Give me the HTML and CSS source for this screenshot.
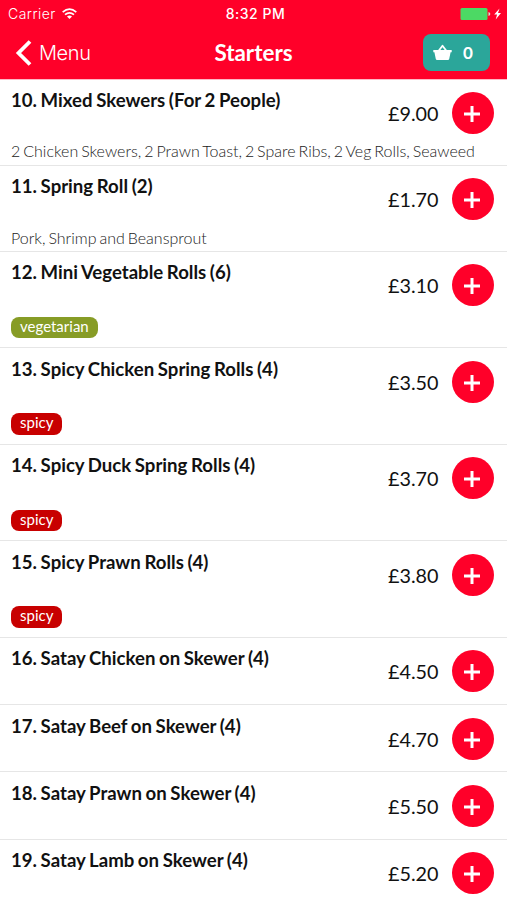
FILE: index.html
```html
<!DOCTYPE html>
<html lang="en">
<head>
<meta charset="utf-8">
<title>Starters</title>
<link rel="stylesheet" href="styles.css">
</head>
<body>
<header class="top">
  <div class="status">
    <div class="carrier"><span>Carrier</span>
      <svg class="wifi" width="15" height="12" viewBox="0 0 15 12" fill="none" stroke="#fff" stroke-width="1.7"><path d="M.7 4.200Q7.500-1.800 14.300 4.200M3 6.700Q7.500 2.900 12 6.700"/><path d="M5 8.500Q7.500 6.700 10 8.500L7.500 11z" fill="#fff" stroke="none"/></svg>
    </div>
    <div class="time">8:32 PM</div>
    <div class="power">
      <svg width="43" height="14" viewBox="0 0 43 14"><rect x=".5" y="1" width="27" height="12" rx="1.500" fill="#4cd964"/><path d="M28.500 5v4q1.800-.6 1.800-2t-1.800-2z" fill="#c9f2ce"/><path d="M39.500 1.500L34.200 7.500h2.900L35.700 12.500L41 6h-3z" fill="#fff"/></svg>
    </div>
  </div>
  <nav class="nav">
    <div class="back"><svg width="17" height="26" viewBox="0 0 17 26" fill="none" stroke="#fff" stroke-width="3.800"><path d="M15 1.500L3.500 13L15 24.500"/></svg><span>Menu</span></div>
    <h1 class="title">Starters</h1>
    <div class="basket"><svg width="19" height="17" viewBox="0 0 19 17"><path d="M5.500 7L9.500 1.800L13.500 7" stroke="#fff" stroke-width="1.800" fill="none" stroke-linejoin="round"/><path d="M.3 6h18.400v2.300h-1.100L16.200 15q-.3 1-1.200 1H4q-.9 0-1.200-1L1.400 8.300H.3z" fill="#fff"/></svg><span>0</span></div>
  </nav>
</header>
<main class="list" id="list"></main>
<script src="script.js"></script>
</body>
</html>
```
FILE: styles.css
```css
* { box-sizing: border-box; }
body { margin: 0; width: 507px; height: 900px; overflow: hidden; background: #fff; color: #111; font-family: Lato, sans-serif; }
.top { height: 79.600px; background: #ff0029; color: #fff; border-bottom: 1px solid #ffb9c5; }
.status { display: grid; grid-template-columns: 1fr auto 1fr; height: 27px; align-items: center; padding: 0 4px 0 8px; font: 14px/27px Inter, sans-serif; }
.carrier { display: flex; align-items: center; gap: 6px; font-weight: 300; letter-spacing: .45px; }
.time { font-size: 14px; font-weight: 500; letter-spacing: .5px; }
.power { display: flex; justify-content: flex-end; }
.nav { display: grid; grid-template-columns: 1fr auto 1fr; align-items: center; height: 51px; padding: 0 17px 0 15px; }
.back { display: flex; align-items: center; gap: 7px; font-family: Inter, sans-serif; font-size: 20px; font-weight: 300; letter-spacing: -.4px; }
.title { margin: 0 0 0 2px; font-size: 22.400px; font-weight: 700; line-height: 28px; }
.basket { justify-self: end; display: flex; align-items: center; gap: 11px; width: 67px; height: 37px; padding-left: 10px; border-radius: 8px; background: #2ba69a; font-size: 17px; font-weight: 700; }
.item { display: flex; border-bottom: 1px solid #e6e6e6; padding: 0 13px 0 11px; height: 67.200px; }
.item.note { height: 86.200px; }
.item.tagged { height: 96.500px; }
.info { flex: 1; min-width: 0; display: flex; flex-direction: column; }
.name { margin: 8.500px 0 0; font-size: 18.600px; line-height: 24px; font-weight: 700; word-spacing: -.900px; white-space: nowrap; }
.desc { margin: 29.300px 0 0; font-size: 16px; line-height: 20px; font-weight: 300; word-spacing: -1.400px; color: #222; white-space: nowrap; }
.tag { align-self: flex-start; margin-top: 32.500px; height: 21.500px; padding: 0 9px; border-radius: 8px; color: #fff; font-size: 15px; line-height: 19px; }
.vegetarian { background: #879c26; }
.spicy { background: #c80000; }
.buy { display: flex; align-items: center; gap: 13.500px; height: 42px; margin-top: 12.500px; font-size: 19.800px; }
.add { width: 42px; height: 42px; border: 0; border-radius: 50%; background: #ff0029; padding: 2px 2px 0 0; display: grid; place-items: center; }
```
FILE: script.js
```js
const items = [
  ["10. Mixed Skewers (For 2 People)", "£9.00", "2 Chicken Skewers, 2 Prawn Toast, 2 Spare Ribs, 2 Veg Rolls, Seaweed"],
  ["11. Spring Roll (2)", "£1.70", "Pork, Shrimp and Beansprout"],
  ["12. Mini Vegetable Rolls (6)", "£3.10", "", "vegetarian"],
  ["13. Spicy Chicken Spring Rolls (4)", "£3.50", "", "spicy"],
  ["14. Spicy Duck Spring Rolls (4)", "£3.70", "", "spicy"],
  ["15. Spicy Prawn Rolls (4)", "£3.80", "", "spicy"],
  ["16. Satay Chicken on Skewer (4)", "£4.50"],
  ["17. Satay Beef on Skewer (4)", "£4.70"],
  ["18. Satay Prawn on Skewer (4)", "£5.50"],
  ["19. Satay Lamb on Skewer (4)", "£5.20"]
];
document.getElementById("list").innerHTML = items.map(([name, price, desc, tag]) => `
<article class="item ${desc ? "note" : tag ? "tagged" : ""}">
  <div class="info"><h2 class="name">${name}</h2>${desc ? `<p class="desc">${desc}</p>` : ""}${tag ? `<span class="tag ${tag}">${tag}</span>` : ""}</div>
  <div class="buy"><span>${price}</span><button class="add" aria-label="Add"><svg width="16" height="16" viewBox="0 0 16 16" stroke="#fff" stroke-width="3"><path d="M8 0v16M0 8h16"/></svg></button></div>
</article>`).join("");
```
